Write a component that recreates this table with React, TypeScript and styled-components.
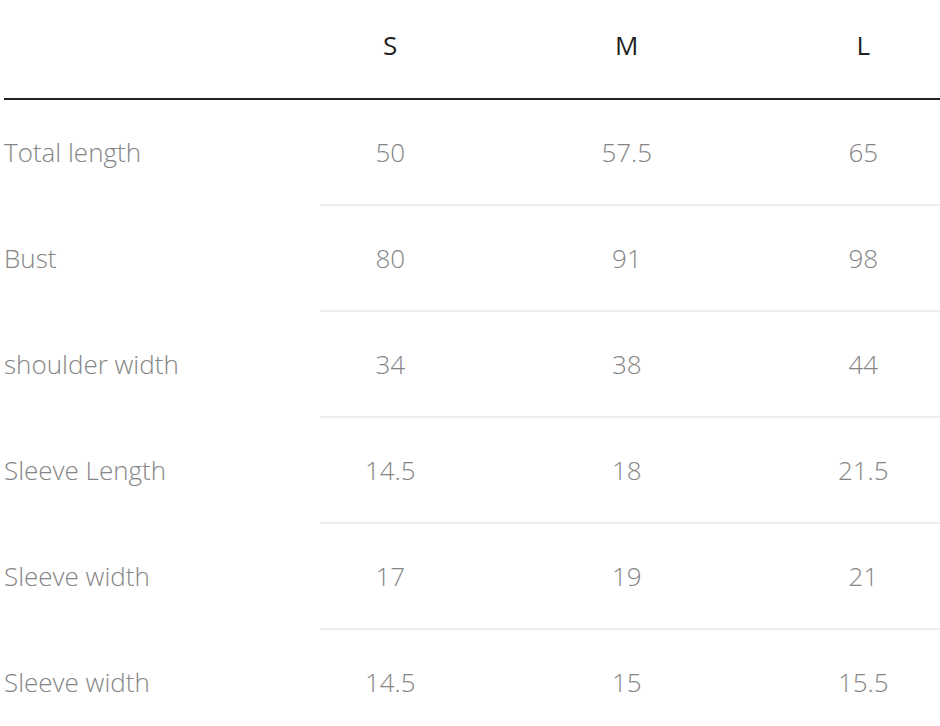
import React from "react";
import styled, { createGlobalStyle } from "styled-components";

const GlobalStyle = createGlobalStyle`
  html, body {
    margin: 0;
    padding: 0;
    background: #ffffff;
    overflow: hidden;
  }
  body {
    font-family: "Open Sans", "Liberation Sans", sans-serif;
  }
`;

const Page = styled.div`
  width: 940px;
  height: 726px;
  overflow: hidden;
  padding-left: 4px;
  box-sizing: border-box;
`;

const Table = styled.div`
  width: 978px;
  display: flex;
  flex-direction: column;
`;

const Row = styled.div<{ $header?: boolean }>`
  display: grid;
  grid-template-columns: 268px repeat(3, 236.5px);
  align-items: center;
  height: ${(p) => (p.$header ? "100px" : "104px")};
  box-sizing: border-box;
  padding-bottom: ${(p) => (p.$header ? "8px" : "0")};
  border-bottom: ${(p) => (p.$header ? "2px solid #222222" : "none")};
`;

const Label = styled.div`
  font-size: 26px;
  font-weight: 300;
  color: #858585;
  white-space: nowrap;
`;

const Cell = styled.div<{ $header?: boolean }>`
  text-align: center;
  font-size: 26px;
  font-weight: ${(p) => (p.$header ? 400 : 300)};
  color: ${(p) => (p.$header ? "#1f1f1f" : "#858585")};
`;

const Divider = styled.div`
  height: 2px;
  margin-left: 316px;
  background: #eeeeee;
`;

const sizes = ["S", "M", "L"];

const rows: { label: string; values: string[] }[] = [
  { label: "Total length", values: ["50", "57.5", "65"] },
  { label: "Bust", values: ["80", "91", "98"] },
  { label: "shoulder width", values: ["34", "38", "44"] },
  { label: "Sleeve Length", values: ["14.5", "18", "21.5"] },
  { label: "Sleeve width", values: ["17", "19", "21"] },
  { label: "Sleeve width", values: ["14.5", "15", "15.5"] },
];

export default function App() {
  return (
    <>
      <GlobalStyle />
      <Page>
        <Table>
          <Row $header>
            <Label />
            {sizes.map((s) => (
              <Cell key={s} $header>
                {s}
              </Cell>
            ))}
          </Row>
          {rows.map((r, i) => (
            <React.Fragment key={i}>
              <Row>
                <Label>{r.label}</Label>
                {r.values.map((v, j) => (
                  <Cell key={j}>{v}</Cell>
                ))}
              </Row>
              {i < rows.length - 1 && <Divider />}
            </React.Fragment>
          ))}
        </Table>
      </Page>
    </>
  );
}
